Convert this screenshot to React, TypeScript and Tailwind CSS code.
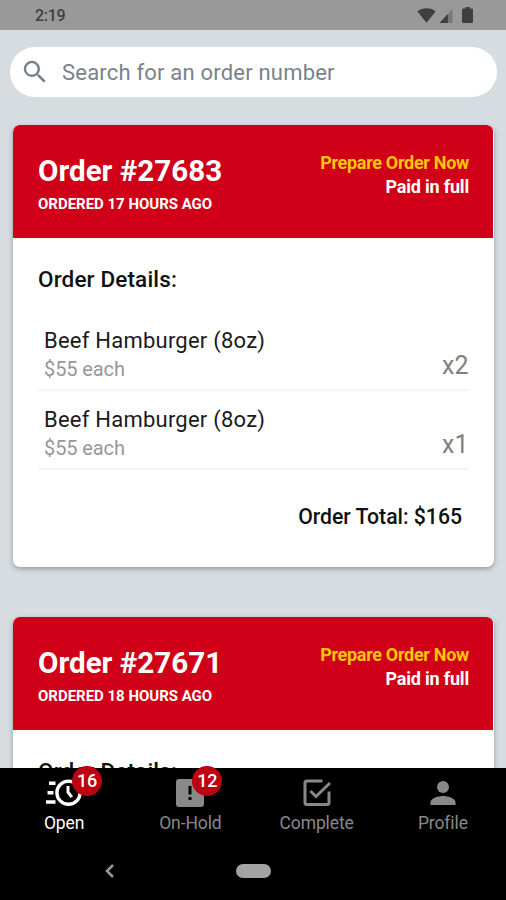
import type { ReactNode } from "react";

type Item = { name: string; price: string; qty: string };

const items: Item[] = [
  { name: "Beef Hamburger (8oz)", price: "$55 each", qty: "x2" },
  { name: "Beef Hamburger (8oz)", price: "$55 each", qty: "x1" },
];

function StatusBar() {
  return (
    <div className="flex h-[30px] shrink-0 items-center justify-between bg-[#999999] pr-[33px] pl-[35px] text-[#3f3f3f]">
      <span className="pt-px text-[16px] leading-[30px] font-medium tracking-[-0.3px]">2:19</span>
      <div className="flex items-center">
        <svg className="h-[15px] w-[19px]" viewBox="0 0 19 15" fill="currentColor">
          <path d="M0.4 3.4C2.9 1.3 6 0.2 9.5 0.2s6.600 1.100 9.100 3.200L9.500 14.800z" />
        </svg>
        <svg className="mt-px ml-[3px] h-[14px] w-[14px]" viewBox="0 0 14 15" fill="currentColor">
          <path d="M14 0v15H0z" opacity="0.35" />
          <path d="M9 5.400V15H0z" />
        </svg>
        <svg className="ml-[9px] h-[16px] w-[11px]" viewBox="0 0 11 16" fill="currentColor">
          <path d="M3.300 0h4.400v1.600h2.200q1.100 0 1.100 1.100v12.200q0 1.100-1.100 1.100H1.100Q0 16 0 14.900V2.700Q0 1.600 1.100 1.600h2.200z" />
        </svg>
      </div>
    </div>
  );
}

function SearchBar() {
  return (
    <div className="mr-[9px] ml-[10px] flex h-[50px] shrink-0 items-center rounded-full bg-white pl-[10px] text-[#77838b]">
      <svg className="h-[30px] w-[30px]" viewBox="0 0 24 24" fill="currentColor">
        <path d="M15.500 14h-.79l-.28-.27A6.471 6.471 0 0 0 16 9.500 6.500 6.500 0 1 0 9.500 16c1.610 0 3.090-.59 4.230-1.570l.27.28v.79l5 4.990L20.490 19l-4.990-5zm-6 0C7.010 14 5 11.990 5 9.500S7.010 5 9.500 5 14 7.010 14 9.500 11.990 14 9.500 14z" />
      </svg>
      <span className="mt-[2px] ml-[12px] text-[22px] leading-[30px] tracking-[0.2px] whitespace-nowrap">
        Search for an order number
      </span>
    </div>
  );
}

function OrderCard({ number, hours }: { number: string; hours: string }) {
  return (
    <section className="h-[442px] shrink-0 overflow-hidden rounded-[7px] bg-white shadow-[0_2px_5px_rgba(60,75,80,0.45)]">
      <header className="mr-px flex h-[113px] justify-between rounded-tr-[6px] bg-[#d00019] pr-[24px] pl-[25px] font-bold text-white">
        <div className="flex flex-col pt-[28px]">
          <h2 className="text-[29.600px] leading-[36px] whitespace-nowrap">Order #{number}</h2>
          <p className="mt-[6px] text-[15px] leading-[18px] tracking-[-0.02px] whitespace-nowrap">ORDERED {hours} HOURS AGO</p>
        </div>
        <div className="flex flex-col items-end pt-[26px] text-[18px] leading-[24px] tracking-[-0.3px] whitespace-nowrap">
          <p className="text-[#ffc60b]">Prepare Order Now</p>
          <p className="tracking-[-0.2px]">Paid in full</p>
        </div>
      </header>
      <div className="pr-[25px] pl-[25px]">
        <h3 className="pt-[26px] text-[22.500px] leading-[30px] font-medium tracking-[0.15px] whitespace-nowrap text-[#111]">Order Details:</h3>
        <div className="mt-[18px] flex flex-col">
          {items.map((item, i) => (
            <div key={i} className="flex h-[79px] items-end justify-between border-b-2 border-[#f4f4f4] pl-[6px]">
              <div className="flex flex-col pb-[6px] whitespace-nowrap">
                <span className="text-[22px] leading-[28px] tracking-[0.23px] text-[#1a1a1a]">{item.name}</span>
                <span className="text-[20px] leading-[28px] tracking-[-0.1px] text-[#979797]">{item.price}</span>
              </div>
              <span className="w-[27px] pb-[8px] text-[25px] leading-[30px] text-[#808080]">{item.qty}</span>
            </div>
          ))}
        </div>
        <p className="mr-[7px] mt-[33px] text-right text-[21.200px] leading-[28px] font-medium whitespace-nowrap text-[#111]">
          Order Total: $165
        </p>
      </div>
    </section>
  );
}

function Tab({ label, active, badge, children }: { label: string; active?: boolean; badge?: ReactNode; children: ReactNode }) {
  return (
    <div className={`flex flex-1 flex-col items-center ${active ? "text-white" : "text-[#898989]"}`}>
      <div className="relative mt-[9px] flex h-[32px] w-[38px] items-center justify-center">
        {children}
        {badge}
      </div>
      <span className="mt-[2px] text-[17.500px] leading-[24px] tracking-[-0.1px] whitespace-nowrap">{label}</span>
    </div>
  );
}

function Badge({ count, className }: { count: string; className: string }) {
  return (
    <span
      className={`absolute top-[-11px] flex h-[30px] w-[30px] items-center justify-center rounded-full bg-[#bd0012] text-[18px] leading-[20px] font-medium text-white ${className}`}
    >
      {count}
    </span>
  );
}

function TabBar() {
  return (
    <nav className="flex h-[75px] shrink-0 pl-px">
      <Tab label="Open" active badge={<Badge count="16" className="left-[27px]" />}>
        <svg className="h-[28px] w-[36px]" viewBox="0 0 36 28" fill="none" stroke="currentColor">
          <circle cx="22.500" cy="13.700" r="11.600" strokeWidth="3.400" />
          <path d="M22 7v6.200l3.800 5" strokeWidth="3" />
          <path d="M3 4.200h6.500M1.500 13.700h6M0 23h9.500" strokeWidth="3.400" />
        </svg>
      </Tab>
      <Tab label="On-Hold" badge={<Badge count="12" className="left-[21px]" />}>
        <svg className="h-[28px] w-[28px]" viewBox="0 0 28 28">
          <rect width="28" height="28" rx="3" fill="currentColor" />
          <path d="M12.500 7h3v8.500h-3zM12.500 18h3v3h-3z" fill="#000" />
        </svg>
      </Tab>
      <Tab label="Complete">
        <svg className="h-[28px] w-[28px]" viewBox="0 0 28 28" fill="none" stroke="currentColor" strokeWidth="3">
          <path d="M19.500 2H4Q2 2 2 4v19.500q0 2 2 2h20q2 0 2-2V12.500" />
          <path d="M7.500 12l5.500 5.500L27 4" />
        </svg>
      </Tab>
      <Tab label="Profile">
        <svg className="h-[24px] w-[26px]" viewBox="0 0 26 24" fill="currentColor">
          <circle cx="13" cy="6" r="6" />
          <path d="M13 15c-4.200 0-12.500 2-12.500 6.200V24h25v-2.800C25.500 17 17.200 15 13 15z" />
        </svg>
      </Tab>
    </nav>
  );
}

export default function App() {
  return (
    <div className="flex h-[900px] w-[506px] flex-col overflow-hidden bg-[#d7dce1] font-[Roboto,sans-serif]">
      <StatusBar />
      <main className="flex h-[738px] shrink-0 flex-col overflow-hidden pt-[17px]">
        <SearchBar />
        <div className="mt-[28px] mr-[12px] ml-[13px] flex flex-col gap-[50px]">
          <OrderCard number="27683" hours="17" />
          <OrderCard number="27671" hours="18" />
        </div>
      </main>
      <footer className="flex h-[132px] shrink-0 flex-col bg-black">
        <TabBar />
        <div className="flex h-[56px] items-center pl-[105px] text-[#999]">
          <svg className="h-[14px] w-[9px]" viewBox="0 0 9 14" fill="none" stroke="currentColor" strokeWidth="2.500">
            <path d="M8 1L2 7l6 6" />
          </svg>
          <div className="ml-[122px] h-[14px] w-[35px] rounded-full bg-[#a3a3a3]" />
        </div>
      </footer>
    </div>
  );
}
